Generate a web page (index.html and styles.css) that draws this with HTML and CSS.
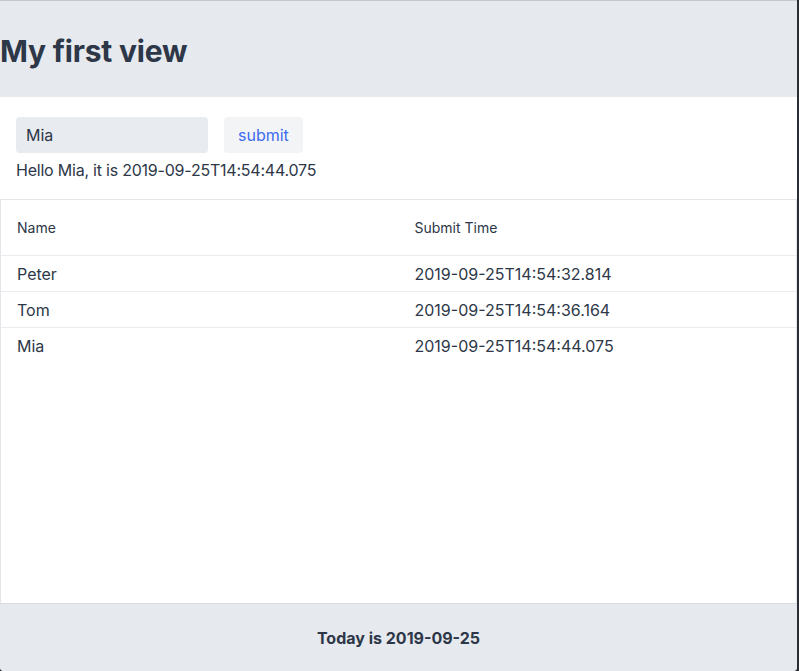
FILE: index.html
```html
<!DOCTYPE html>
<html>
<head>
<meta charset="utf-8">
<link rel="stylesheet" href="styles.css">
</head>
<body>
<div class="app">
  <header class="header"><h1 class="title">My first view</h1></header>
  <section class="form">
    <div class="form-row">
      <input class="name-input" type="text" value="Mia">
      <button class="submit-btn">submit</button>
    </div>
    <p class="greeting">Hello Mia, it is 2019-09-25T14:54:44.075</p>
  </section>
  <div class="grid">
    <table class="table">
      <thead>
        <tr><th>Name</th><th>Submit Time</th></tr>
      </thead>
      <tbody>
        <tr><td>Peter</td><td>2019-09-25T14:54:32.814</td></tr>
        <tr><td>Tom</td><td>2019-09-25T14:54:36.164</td></tr>
        <tr><td>Mia</td><td>2019-09-25T14:54:44.075</td></tr>
      </tbody>
    </table>
  </div>
  <footer class="footer">Today is 2019-09-25</footer>
</div>
</body>
</html>
```

FILE: styles.css
```css
html, body {
  margin: 0;
  padding: 0;
  height: 100%;
}
body {
  background: #2a2d33;
  font-family: Inter, "Noto Sans", sans-serif;
  color: #2d3748;
}
.app {
  width: 797px;
  height: 671px;
  background: #ffffff;
  display: flex;
  flex-direction: column;
  border-top: 1px solid #c6c8cc;
  box-sizing: border-box;
  border-bottom-right-radius: 4px;
  border-bottom-left-radius: 4px;
  overflow: hidden;
}
.header {
  background: #e6e9ee;
  height: 96px;
  display: flex;
  align-items: center;
  flex-shrink: 0;
}
.title {
  margin: 0;
  font-size: 30px;
  font-weight: 700;
  color: #2d3748;
  letter-spacing: -0.2px;
  padding-top: 3px;
}
.form {
  padding: 20px 16px 0 16px;
  height: 102px;
  box-sizing: border-box;
  flex-shrink: 0;
}
.form-row {
  display: flex;
  gap: 16px;
}
.name-input {
  width: 192px;
  height: 36px;
  box-sizing: border-box;
  border: none;
  border-radius: 4px;
  background: #e8ebf0;
  padding: 0 10px;
  font-family: inherit;
  font-size: 16px;
  color: #2d3748;
  outline: none;
}
.submit-btn {
  height: 36px;
  padding: 0 14px;
  border: none;
  border-radius: 4px;
  background: #f3f4f6;
  color: #3d6cf0;
  font-family: inherit;
  font-size: 16px;
}
.greeting {
  margin: 7px 0 0 0;
  font-size: 16px;
  line-height: 20px;
  letter-spacing: -0.22px;
  color: #2d3748;
}
.grid {
  flex: 1;
  border-top: 1px solid #e2e5ea;
  border-left: 1px solid #e2e5ea;
  border-right: 1px solid #e2e5ea;
  box-sizing: border-box;
}
.table {
  width: 100%;
  border-collapse: collapse;
  table-layout: fixed;
}
.table th {
  text-align: left;
  font-weight: 400;
  font-size: 14px;
  height: 55px;
  padding: 0 16px;
  color: #2d3748;
  border-bottom: 1px solid #e8ebef;
}
.table td {
  height: 35px;
  padding: 0 16px;
  font-size: 16px;
  color: #2d3748;
  border-bottom: 1px solid #e8ebef;
}
.table tbody tr:last-child td {
  border-bottom: none;
}
.footer {
  height: 68px;
  flex-shrink: 0;
  background: #e6e9ee;
  border-top: 1px solid #d8dbe0;
  box-sizing: border-box;
  display: flex;
  align-items: center;
  justify-content: center;
  font-weight: 700;
  font-size: 16px;
  color: #2d3748;
}
```
